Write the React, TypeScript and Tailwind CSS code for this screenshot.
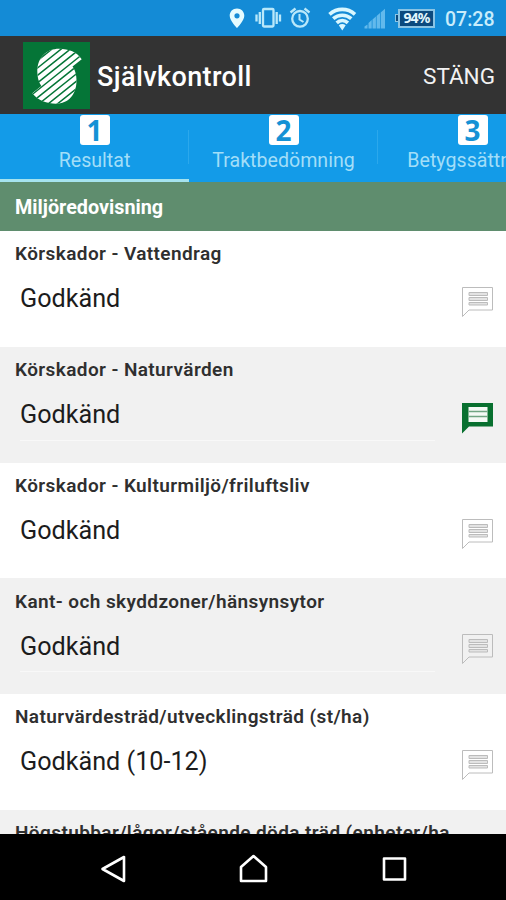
import { clsx } from 'clsx'

const TABS = ['Resultat', 'Traktbedömning', 'Betygssättning']

const ROWS = [
  { label: 'Körskador - Vattendrag', value: 'Godkänd', commented: false },
  { label: 'Körskador - Naturvärden', value: 'Godkänd', commented: true },
  { label: 'Körskador - Kulturmiljö/friluftsliv', value: 'Godkänd', commented: false },
  { label: 'Kant- och skyddzoner/hänsynsytor', value: 'Godkänd', commented: false },
  { label: 'Naturvärdesträd/utvecklingsträd (st/ha)', value: 'Godkänd (10-12)', commented: false },
  { label: 'Högstubbar/lågor/stående döda träd (enheter/ha', value: 'Godkänd', commented: false },
]

function StatusBar() {
  return (
    <div className="flex h-9 shrink-0 items-center bg-[#148bd6] pl-[229px]">
      <svg width="166" height="36" viewBox="0 0 166 36" className="shrink-0" fill="none">
        <path
          fill="#e4fbff"
          fillRule="evenodd"
          d="M8 8.500c-4.300 0-7.300 3.200-7.300 7.200C.7 20.500 8 28 8 28s7.300-7.500 7.300-12.300c0-4-3-7.200-7.300-7.200Zm0 4.700a2.600 2.600 0 1 1 0 5.200 2.600 2.600 0 0 1 0-5.200Z"
        />
        <g stroke="#b9e8fa" strokeWidth="2.300">
          <rect x="34" y="9" width="10.500" height="17.500" rx="1" />
          <path d="M30.800 12v12M27.500 14.500v7M47.700 12v12M51 14.500v7" />
        </g>
        <g stroke="#b9e8fa" strokeWidth="2.300">
          <circle cx="71" cy="18.800" r="7.800" />
          <path strokeWidth="2" d="M70.500 14v5.500l4 2.500" />
          <path d="M61.500 12.500l5-4M80.500 12.500l-5-4" />
        </g>
        <g stroke="#d9f7ff" strokeWidth="3.700">
          <path d="M100.500 14.300c7.500-6.500 18-6.500 25.500 0" />
          <path d="M104.200 18.600c5.300-4.500 12.800-4.500 18.100 0" />
          <path d="M107.700 22.800c3.300-2.900 7.900-2.900 11.200 0" />
        </g>
        <path fill="#d9f7ff" d="M109.800 25.200c2.100-1.600 4.800-1.600 6.900 0l-3.400 5.300Z" />
        <path
          fill="#62b9ec"
          d="M135.500 28.500v-2l3-2v4ZM139.500 28.500v-5.500l3.200-3v8.500ZM143.500 28.500v-9l3.400-3v12ZM147.600 28.500v-12.500l3.400-3v15.500ZM151.700 28.500v-16l4.300-3.700v19.700Z"
        />
      </svg>
      <div className="flex shrink-0 items-center">
        <div className="h-2 w-[3px] border border-r-0 border-[#8ac4e4] bg-[#0b4a7e]" />
        <div className="flex h-[19px] w-[37px] items-center justify-center border-2 border-[#8ac4e4] bg-[#0b4a7e] font-['Noto_Sans',sans-serif] text-[14px] font-bold tracking-[-0.9px] text-[#e2f7ff]">
          94%
        </div>
      </div>
      <span className="mt-[3px] ml-2.5 text-[19.500px] font-medium text-[#c9edfb]">07:28</span>
    </div>
  )
}

function Logo() {
  return (
    <svg width="67" height="67" viewBox="0 0 67 67" className="shrink-0">
      <defs>
        <clipPath id="mark">
          <path d="M58.700 17.300L49.500 24.500C52 28 53.500 32 53.500 38.500C53.500 53 45 61.700 33 61.700C24 61.700 15 58.500 9.300 51.300L18.300 44C15.500 40 14.300 35 14.300 29.500C14.300 15 24 6.700 36 6.700C46 6.700 54 10 58.700 17.300Z" />
        </clipPath>
      </defs>
      <rect width="67" height="67" fill="#057537" />
      <g clipPath="url(#mark)">
        <rect width="67" height="67" fill="#fff" />
        <path
          stroke="#057537"
          strokeWidth="1.500"
          d="M-5 34.200L70 -25.800M-5 41.600L70 -18.400M-5 49L70 -11M-5 56.400L70 -3.600M-5 63.800L70 3.800M-5 71.200L70 11.200M-5 78.600L70 18.600M-5 86L70 26M-5 93.400L70 33.400M-5 100.800L70 40.800"
        />
      </g>
    </svg>
  )
}

function CommentIcon({ active }: { active: boolean }) {
  if (active) {
    return (
      <svg width="33" height="32" viewBox="0 0 33 32" className="shrink-0">
        <path fill="#08702f" d="M1 1h31v23.500H8L1 31.500Z" />
        <path fill="#f4faf5" d="M7.500 5h19v15h-19Z" />
        <path stroke="#6fa582" strokeWidth="1.300" d="M7.500 9.500h19M7.500 14.500h19" />
      </svg>
    )
  }
  return (
    <svg width="33" height="32" viewBox="0 0 33 32" className="shrink-0" fill="none" stroke="#bcbcbc">
      <path d="M1.500 1.500h30v22.500H8L1.500 30.500Z" />
      <path fill="#e3e3e3" d="M8 6.500h18.500v3H8ZM8 11.500h18.500v3H8ZM8 16.500h18.500v2.500H8Z" />
    </svg>
  )
}

function NavBar() {
  return (
    <div className="flex h-[66px] shrink-0 items-center bg-black">
      <svg width="506" height="66" viewBox="0 0 506 66" fill="none" stroke="#fff" strokeWidth="2.600" strokeLinejoin="round">
        <path d="M102.500 35L124 23v24Z" />
        <path d="M253.500 22L241 33v14h25V33Z" />
        <rect x="384" y="24.500" width="21" height="21" />
      </svg>
    </div>
  )
}

function App() {
  return (
    <div className="flex h-[900px] w-[506px] flex-col overflow-hidden bg-white font-[Roboto,sans-serif] leading-none">
      <StatusBar />

      <header className="flex h-[78px] shrink-0 items-center bg-[#333333] pr-[11px] pl-[23px]">
        <Logo />
        <h1 className="mt-[5px] ml-[7px] text-[27px] font-medium tracking-[0.4px] text-white">Självkontroll</h1>
        <button className="mt-0.5 ml-auto text-[22.500px] text-[#f2f2f2]">STÄNG</button>
      </header>

      <nav className="flex h-[68px] shrink-0 bg-[#139be8]">
        {TABS.map((tab, i) => (
          <div
            key={tab}
            className={clsx(
              'flex w-[189px] shrink-0 flex-col items-center border-b-[3px]',
              i === 0 ? 'border-[#a5e3ee]' : 'border-transparent',
            )}
          >
            <div className="flex w-full grow items-center">
              <div className="flex grow flex-col items-center self-start">
                <span className="mt-px flex h-[30px] w-[30px] items-center justify-center rounded-[3px] bg-white font-['Noto_Sans',sans-serif] text-[28px] font-bold text-[#1592d5]">
                  {i + 1}
                </span>
                <span className="mt-1.5 text-[19.600px] whitespace-nowrap text-[#a2def8]">{tab}</span>
              </div>
              <div className="-ml-px h-[34px] w-px bg-[#2ba8ec]" />
            </div>
          </div>
        ))}
      </nav>

      <div className="flex h-[49px] shrink-0 items-center bg-[#5f8d6e] pt-[3px] pl-[15px]">
        <h2 className="text-[19.800px] font-bold text-white">Miljöredovisning</h2>
      </div>

      <main className="min-h-0 grow overflow-hidden">
        {ROWS.map((row, i) => (
          <section
            key={row.label}
            className={clsx('h-[115.750px] pt-[13.250px]', i % 2 ? 'bg-[#f1f1f1]' : 'bg-white')}
          >
            <h3 className="pl-[15px] text-[19px] font-semibold tracking-[0.4px] whitespace-nowrap text-[#2f2f2f]">
              {row.label}
            </h3>
            <div className="flex pr-3 pl-5">
              <div className={clsx('h-[61.500px] w-[415px] border-b pt-[23px]', i % 2 ? 'border-[#f8f8f8]' : 'border-transparent')}>
                <p className="text-[25.200px] text-[#1c1c1c]">{row.value}</p>
              </div>
              <div className="mt-[22.750px] ml-auto">
                <CommentIcon active={row.commented} />
              </div>
            </div>
          </section>
        ))}
      </main>

      <NavBar />
    </div>
  )
}

export default App
